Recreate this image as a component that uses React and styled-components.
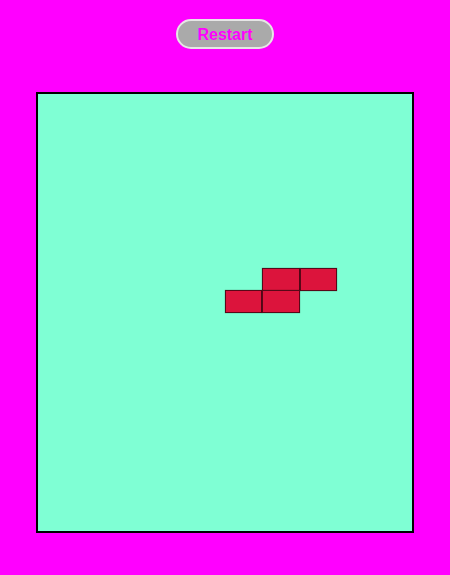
import React from 'react'
import styled, { createGlobalStyle } from 'styled-components'

const GlobalStyle = createGlobalStyle`
  body {
    margin: 0;
    background: #ff00ff;
    font-family: "Liberation Sans", Arial, sans-serif;
  }
`

const Page = styled.div`
  display: flex;
  flex-direction: column;
  align-items: center;
  padding-top: 19px;
`

const RestartButton = styled.button`
  width: 98px;
  height: 30px;
  border: 2px solid #e6e6e6;
  border-radius: 15px;
  background: #aaaaaa;
  color: #ff00ff;
  font-family: "Liberation Sans", Arial, sans-serif;
  font-weight: bold;
  font-size: 16px;
  padding: 2px 0 0;
  cursor: pointer;
`

const Board = styled.div`
  margin-top: 43px;
  width: 374px;
  height: 437px;
  border: 2px solid #000;
  background: #7fffd4;
  display: grid;
  grid-template-columns: repeat(10, 1fr);
  grid-template-rows: repeat(20, 1fr);
`

const Cell = styled.div`
  grid-column: ${p => p.$col + 1};
  grid-row: ${p => p.$row + 1};
  margin-top: -1px;
  background: #dc143c;
  border: 1px solid rgba(0, 0, 0, 0.6);
  box-shadow: 0 0 1px rgba(0, 0, 0, 0.5);
`

const piece = [
  { col: 6, row: 8 },
  { col: 7, row: 8 },
  { col: 5, row: 9 },
  { col: 6, row: 9 },
]

export default function App() {
  return (
    <>
      <GlobalStyle />
      <Page>
        <RestartButton>Restart</RestartButton>
        <Board>
          {piece.map((c, i) => (
            <Cell key={i} $col={c.col} $row={c.row} />
          ))}
        </Board>
      </Page>
    </>
  )
}
